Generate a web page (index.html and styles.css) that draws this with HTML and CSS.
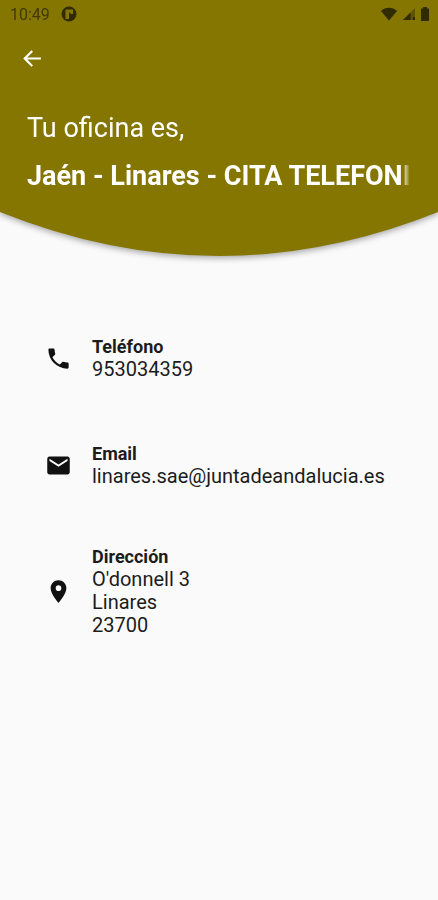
FILE: index.html
```
<!DOCTYPE html>
<html lang="es">
<head>
<meta charset="utf-8">
<meta name="viewport" content="width=device-width, initial-scale=1">
<title>Tu oficina</title>
<link rel="stylesheet" href="styles.css">
</head>
<body>
<header class="hero">
  <div class="hero-body">
    <div class="status">
      <span class="time">10:49</span>
      <svg class="status-app" viewBox="0 0 16 16" aria-hidden="true"><circle cx="8" cy="8" r="7.500" fill="#302b00"/><path d="M4.500 3.500H12v4.500H9.500V6.500H8V13H4.500z" fill="#847600"/></svg>
      <span class="status-icons">
        <svg width="18" height="14" viewBox="0 0 18 14" aria-hidden="true"><path d="M1 4C5.500-.2 12.500-.2 17 4L9 13.500Z"/></svg>
        <svg width="14" height="14" viewBox="0 0 14 14" aria-hidden="true"><path d="M13 1V13H1Z" opacity=".45"/><path d="M8.500 5.500V13H1ZM11 10h2v3h-2z"/></svg>
        <svg width="10" height="14" viewBox="0 0 10 14" aria-hidden="true"><path d="M3 0h4v1.500h2V14H1V1.500h2z"/></svg>
      </span>
    </div>
    <button class="back" type="button" aria-label="Volver">
      <svg viewBox="0 0 24 24" aria-hidden="true"><path d="M21 11H7.830l5.590-5.590L12 4l-8 8 8 8 1.410-1.410L7.830 13H21z"/></svg>
    </button>
    <div class="heading">
      <p class="intro">Tu oficina es,</p>
      <h1 class="office">Jaén - Linares - CITA TELEFONI</h1>
    </div>
  </div>
  <svg class="curve" viewBox="0 0 438 45" preserveAspectRatio="none" aria-hidden="true"><path d="M0 0H438V1Q219 89 0 1Z"/></svg>
</header>
<main class="contacts">
  <section class="contact">
    <svg class="icon" viewBox="0 0 24 24" aria-hidden="true"><path d="M6.620 10.790c1.440 2.830 3.760 5.140 6.590 6.590l2.200-2.200c.27-.27.67-.36 1.020-.24 1.120.37 2.330.57 3.570.57.55 0 1 .45 1 1V20c0 .55-.45 1-1 1-9.390 0-17-7.610-17-17 0-.55.45-1 1-1h3.500c.55 0 1 .45 1 1 0 1.250.2 2.450.57 3.570.11.35.03.74-.25 1.020z"/></svg>
    <div>
      <h2>Teléfono</h2>
      <p>953034359</p>
    </div>
  </section>
  <section class="contact">
    <svg class="icon" viewBox="0 0 24 24" aria-hidden="true"><path d="M20 4H4c-1.100 0-1.990.9-1.990 2L2 18c0 1.100.9 2 2 2h16c1.100 0 2-.9 2-2V6c0-1.100-.9-2-2-2zm0 4l-8 5-8-5V6l8 5 8-5z"/></svg>
    <div>
      <h2>Email</h2>
      <p>linares.sae@juntadeandalucia.es</p>
    </div>
  </section>
  <section class="contact">
    <svg class="icon" viewBox="0 0 24 24" aria-hidden="true"><path d="M12 2C8.130 2 5 5.130 5 9c0 5.250 7 13 7 13s7-7.750 7-13c0-3.870-3.130-7-7-7zm0 9.500a2.500 2.500 0 0 1 0-5 2.500 2.500 0 0 1 0 5z"/></svg>
    <div>
      <h2>Dirección</h2>
      <p>O'donnell 3<br>Linares<br>23700</p>
    </div>
  </section>
</main>
</body>
</html>
```
FILE: styles.css
```
* { box-sizing: border-box; }
body {
  margin: 0;
  background: #fafafa;
  color: #1c1c1c;
  font-family: Roboto, "Liberation Sans", sans-serif;
}
h1, h2, p { margin: 0; }
svg { display: block; }

.hero {
  color: #fff;
  filter: drop-shadow(0 2px 3px rgba(0, 0, 0, .35));
}
.hero-body {
  background: #847600;
  padding-bottom: 12px;
}
.status {
  display: flex;
  align-items: center;
  height: 28px;
  padding: 0 8px 0 10px;
  color: #403900;
}
.time { font-size: 16px; }
.status-app {
  width: 16px;
  height: 16px;
  margin-left: 11px;
}
.status-icons {
  display: flex;
  gap: 4px;
  margin-left: auto;
  fill: #302b00;
}
.back {
  display: block;
  width: 64px;
  height: 60px;
  padding: 0 19px;
  border: 0;
  background: none;
}
.back svg {
  width: 25px;
  height: 25px;
  fill: #fff;
  stroke: #fff;
  stroke-width: 0;
}
.heading { padding: 16px 27px 0; }
.intro {
  font-size: 27px;
  line-height: 48px;
}
.office {
  width: fit-content;
  max-width: 100%;
  overflow: hidden;
  white-space: nowrap;
  font-size: 27px;
  font-weight: 700;
  line-height: 48px;
  mask-image: linear-gradient(to right, #000 calc(100% - 10px), transparent);
}
.curve {
  width: 100%;
  height: 45px;
  margin-top: -1px;
  fill: #847600;
}

.contacts {
  display: flex;
  flex-direction: column;
  gap: 53px;
  padding: 75px 45px 40px;
}
.contact {
  display: flex;
  align-items: center;
  gap: 20px;
  min-height: 54px;
}
.icon {
  flex: none;
  width: 27px;
  height: 27px;
  fill: #111;
}
.contact h2 {
  font-size: 18px;
  font-weight: 700;
  line-height: 23px;
}
.contact p {
  font-size: 20px;
  line-height: 23px;
}
```
